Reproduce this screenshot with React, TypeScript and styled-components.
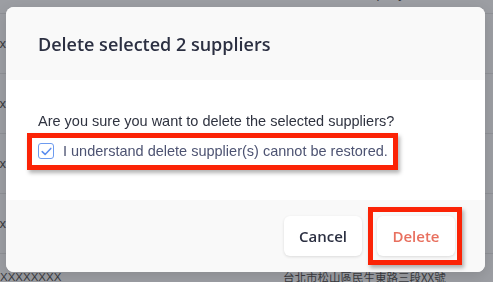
import React from "react";
import styled, { createGlobalStyle } from "styled-components";

const Global = createGlobalStyle`
  html, body { margin: 0; padding: 0; }
  body {
    width: 493px; height: 282px; overflow: hidden;
    background: #9c9ea3;
    font-family: "Liberation Sans", Arial, sans-serif;
  }
`;

const Table = styled.div`
  display: flex;
  flex-direction: column;
  width: 493px;
`;

const Row = styled.div<{ $h: number; $align?: string }>`
  height: ${(p) => p.$h}px;
  display: flex;
  align-items: ${(p) => p.$align || "center"};
  border-bottom: 1px solid #8f9196;
  box-sizing: border-box;
  overflow: hidden;
  color: #3a3b3f;
  font-size: 11px;
`;

const TailCell = styled.div`
  width: 6px;
  overflow: hidden;
  display: flex;
  justify-content: flex-end;
  white-space: nowrap;
  font-size: 13px;
`;

const NameCell = styled.div`
  width: 283px;
  white-space: nowrap;
  font-size: 11.5px;
  padding-top: 17px;
`;

const AddrCell = styled.div`
  white-space: nowrap;
  font-family: "Noto Sans CJK TC", sans-serif;
  font-size: 11.5px;
  padding-top: 15px;
`;

const TopCell = styled.div`
  padding-left: 352px;
  font-size: 13px;
  white-space: nowrap;
  margin-bottom: 12px;
`;

const Overlay = styled.div`
  position: fixed;
  inset: 0;
  display: flex;
  align-items: flex-start;
  padding: 7px 0 0 6px;
`;

const Modal = styled.div`
  width: 479px;
  height: 265px;
  border-radius: 8px;
  overflow: hidden;
  background: #fff;
  display: flex;
  flex-direction: column;
  box-shadow: 0 4px 14px rgba(0, 0, 0, 0.12);
`;

const Header = styled.div`
  height: 73px;
  background: #f9f9f9;
  display: flex;
  align-items: center;
  padding-left: 32px;
  flex-shrink: 0;
`;

const Title = styled.h2`
  margin: 0;
  font-family: "Open Sans", sans-serif;
  font-size: 18px;
  font-weight: 600;
  color: #2c3042;
  padding-top: 1px;
`;

const Body = styled.div`
  height: 120px;
  flex-shrink: 0;
  box-sizing: border-box;
  padding: 31px 32px 0;
  display: flex;
  flex-direction: column;
  align-items: flex-start;
  gap: 10px;
`;

const Question = styled.p`
  margin: 0;
  font-size: 14.5px;
  line-height: 20px;
  color: #2f3340;
`;

const ConfirmRow = styled.label`
  position: relative;
  display: inline-flex;
  align-items: center;
  gap: 9px;
  height: 20px;
  &::after {
    content: "";
    position: absolute;
    inset: -8px -10px -9px -11px;
    border: 5px solid #fb2306;
    box-shadow: 2px 3px 4px rgba(0, 0, 0, 0.3);
    pointer-events: none;
  }
`;

const Box = styled.span`
  width: 16px;
  height: 16px;
  box-sizing: border-box;
  border: 1.5px solid #6d9bef;
  border-radius: 3px;
  display: flex;
  align-items: center;
  justify-content: center;
  background: #fff;
`;

const LabelText = styled.span`
  font-size: 14.5px;
  color: #4d5372;
`;

const Footer = styled.div`
  flex: 1;
  background: #f9f9f9;
  display: flex;
  justify-content: flex-end;
  align-items: center;
  gap: 15px;
  padding-right: 30px;
`;

const Button = styled.button<{ $danger?: boolean }>`
  width: 78px;
  height: 40px;
  border: none;
  border-radius: 6px;
  background: #fff;
  box-shadow: 0 1px 3px rgba(0, 0, 0, 0.12);
  font-family: "Open Sans", sans-serif;
  font-size: 15px;
  font-weight: 600;
  color: ${(p) => (p.$danger ? "#e8705f" : "#2c3042")};
  padding: 0;
`;

const Marked = styled.span`
  position: relative;
  display: inline-flex;
  &::after {
    content: "";
    position: absolute;
    inset: -9px -7px -9px -9px;
    border: 5px solid #fb2306;
    box-shadow: 2px 3px 4px rgba(0, 0, 0, 0.3);
    pointer-events: none;
  }
`;

export default function App() {
  return (
    <>
      <Global />
      <Table>
        <Row $h={14} $align="flex-end">
          <TopCell>company</TopCell>
        </Row>
        {[0, 1, 2, 3].map((i) => (
          <Row key={i} $h={60}>
            <TailCell>XXXXXXXXx</TailCell>
          </Row>
        ))}
        <Row $h={40} $align="flex-start">
          <NameCell>XXXXXXXX</NameCell>
          <AddrCell>台北市松山區民生東路三段XX號</AddrCell>
        </Row>
      </Table>
      <Overlay>
        <Modal>
          <Header>
            <Title>Delete selected 2 suppliers</Title>
          </Header>
          <Body>
            <Question>Are you sure you want to delete the selected suppliers?</Question>
            <ConfirmRow>
              <Box>
                <svg width="11" height="9" viewBox="0 0 11 9">
                  <polyline
                    points="1.2,4.6 4.1,7.4 9.8,1.4"
                    fill="none"
                    stroke="#5b8def"
                    strokeWidth="1.5"
                    strokeLinecap="round"
                    strokeLinejoin="round"
                  />
                </svg>
              </Box>
              <LabelText>I understand delete supplier(s) cannot be restored.</LabelText>
            </ConfirmRow>
          </Body>
          <Footer>
            <Button>Cancel</Button>
            <Marked>
              <Button $danger>Delete</Button>
            </Marked>
          </Footer>
        </Modal>
      </Overlay>
    </>
  );
}
